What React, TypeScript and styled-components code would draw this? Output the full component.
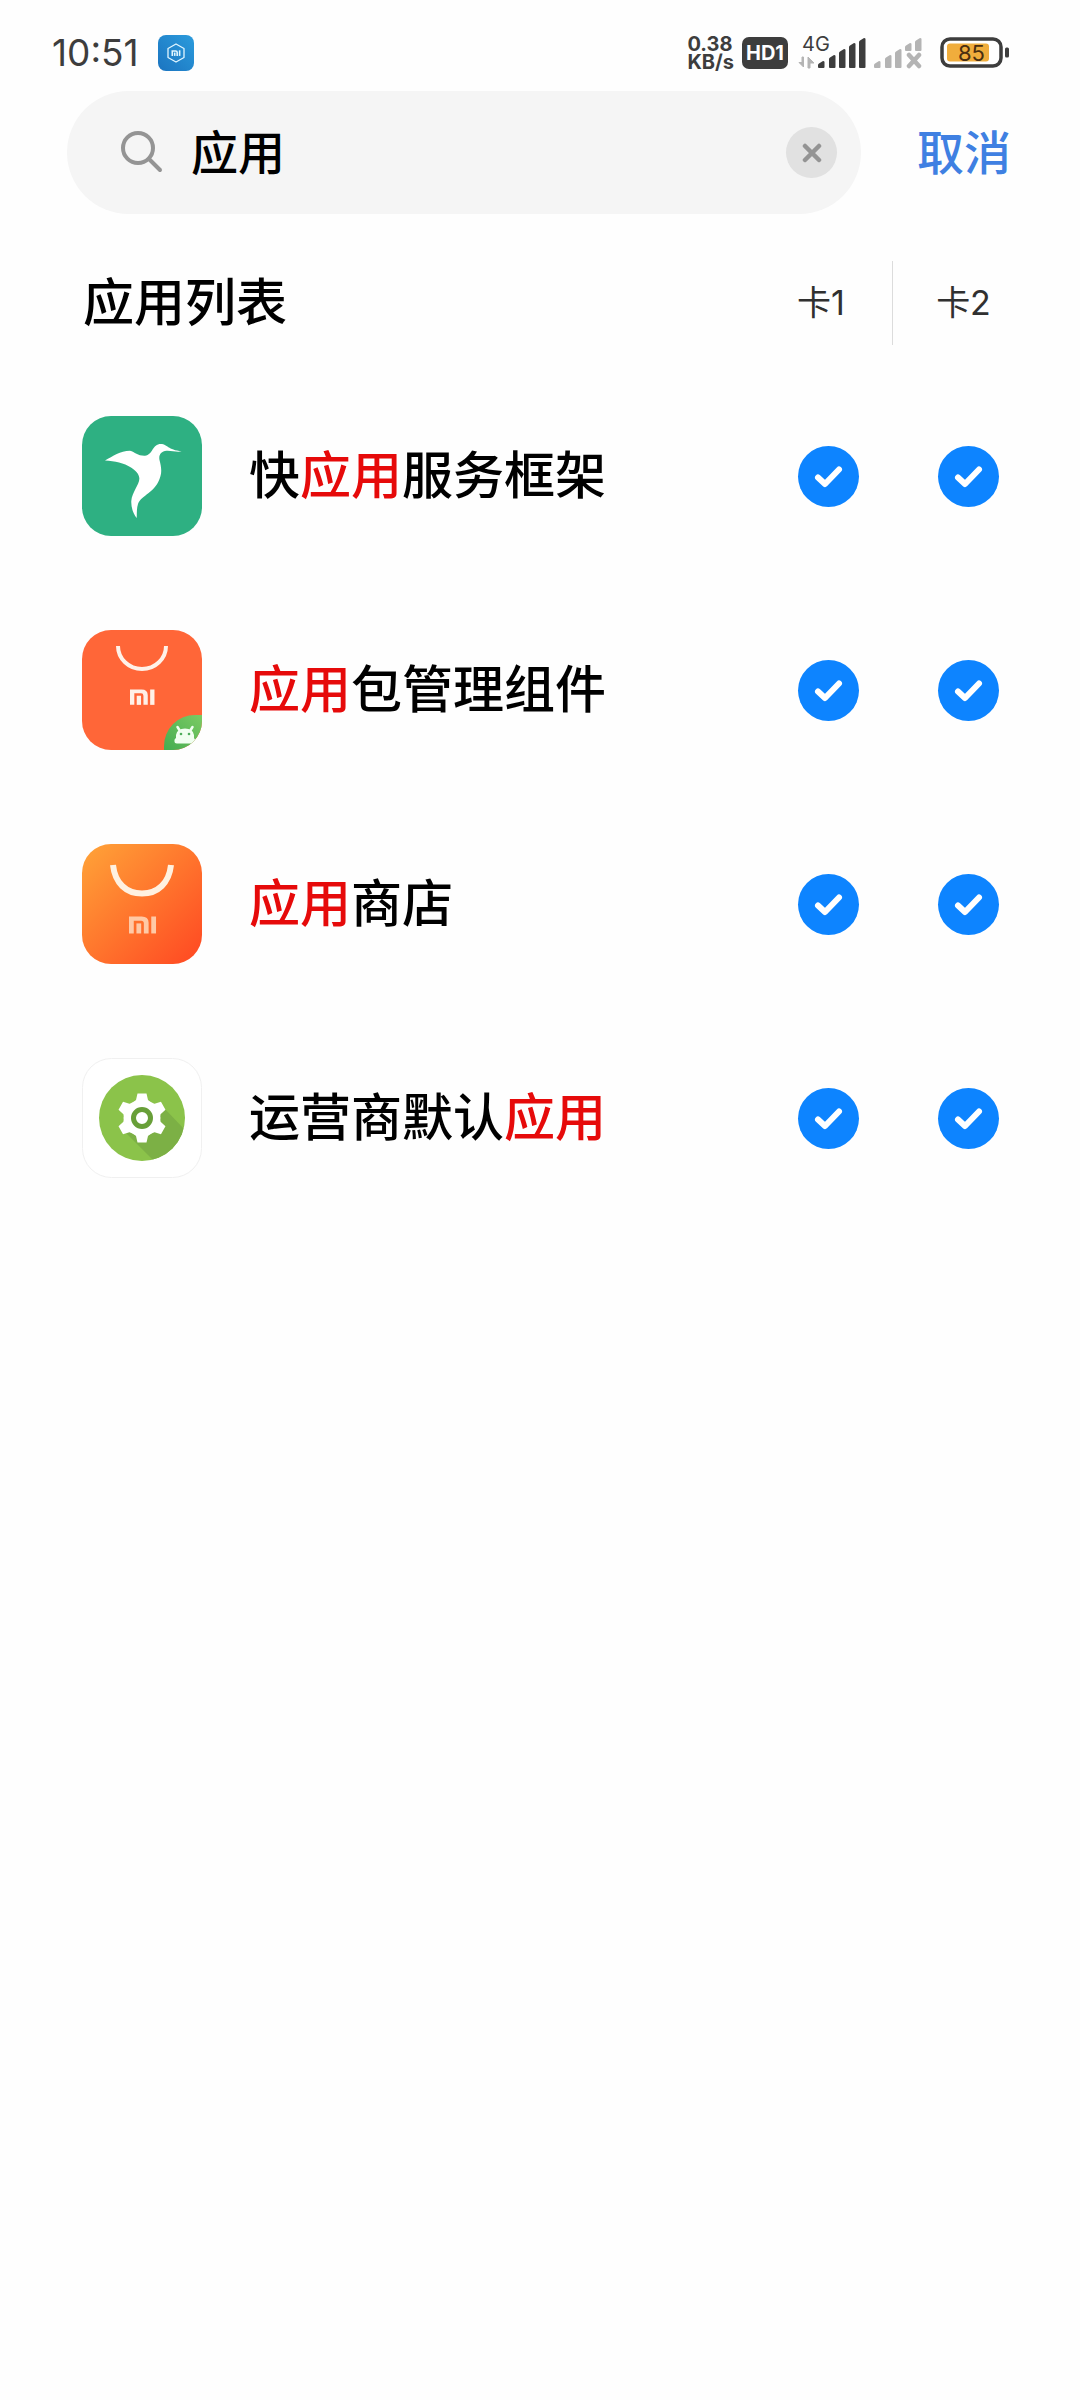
import React, { useState } from "react";
import styled, { createGlobalStyle } from "styled-components";

const GlobalStyle = createGlobalStyle`
  *, *::before, *::after { box-sizing: border-box; }
  html, body { margin: 0; background: #fefefe; }
  body {
    font-family: Inter, "Noto Sans CJK SC", sans-serif;
    color: #000;
  }
  button, input { font-family: inherit; }
`;

const Screen = styled.div`
  min-height: 100vh;
  display: flex;
  flex-direction: column;
`;

const StatusBar = styled.header`
  display: flex;
  align-items: center;
  justify-content: space-between;
  height: 91px;
  padding: 14px 70px 0 52px;
  color: #3d3d3d;
`;

const StatusGroup = styled.div<{ $gap: number }>`
  display: flex;
  align-items: center;
  gap: ${(p) => p.$gap}px;
`;

const Clock = styled.time`
  font-size: 37px;
  line-height: 40px;
`;

const NetSpeed = styled.div`
  white-space: pre-line;
  font-size: 20px;
  line-height: 18px;
  font-weight: 700;
`;

const HdBadge = styled.span`
  width: 46px;
  height: 32px;
  border-radius: 7px;
  background: #3d3d3d;
  color: #fff;
  font-size: 20px;
  line-height: 32px;
  font-weight: 700;
  text-align: center;
`;

const Cellular = styled.div`
  display: grid;
  margin-left: 2px;
  > * { grid-area: 1 / 1; }
`;

const NetworkType = styled.span`
  padding-left: 4px;
  font-size: 20px;
  line-height: 15px;
`;

const Battery = styled.div`
  display: grid;
  place-items: center start;
  margin-left: 10px;
  > * { grid-area: 1 / 1; }
`;

const BatteryLevel = styled.span`
  width: 63px;
  font-size: 22px;
  line-height: 32px;
  color: #4a2e10;
  text-align: center;
`;

const SearchRow = styled.form`
  display: flex;
  align-items: center;
  padding: 0 69px 0 67px;
`;

const SearchBox = styled.label`
  flex: 1;
  min-width: 0;
  display: flex;
  align-items: center;
  height: 123px;
  padding: 0 24px 0 52px;
  border-radius: 62px;
  background: #f5f5f5;
`;

const SearchInput = styled.input`
  flex: 1;
  min-width: 0;
  margin-left: 27px;
  padding: 0;
  border: 0;
  outline: 0;
  background: transparent;
  font-size: 47px;
  line-height: 68px;
  font-weight: 500;
  color: #000;
`;

const ClearButton = styled.button`
  width: 51px;
  height: 51px;
  padding: 0;
  border: 0;
  border-radius: 50%;
  background: #e1e1e1;
  display: grid;
  place-items: center;
`;

const CancelButton = styled.button`
  margin-left: 56px;
  padding: 0;
  border: 0;
  background: transparent;
  font-size: 47px;
  line-height: 68px;
  font-weight: 500;
  color: #3f80e2;
`;

const ListHeader = styled.div`
  display: flex;
  align-items: center;
  height: 84px;
  margin-top: 47px;
  padding: 0 46px 0 83px;
`;

const Title = styled.h1`
  flex: 1;
  margin: 0;
  font-size: 51px;
  line-height: 74px;
  font-weight: 500;
`;

const CardLabel = styled.span`
  width: 142px;
  font-size: 34px;
  line-height: 84px;
  color: #303030;
  text-align: center;
  & + & { border-left: 1px solid #dcdcdc; }
`;

const AppList = styled.ul`
  margin: 24px 0 0;
  padding: 0;
  list-style: none;
`;

const AppRow = styled.li`
  display: flex;
  align-items: center;
  height: 214px;
  padding: 0 42px 0 82px;
`;

const AppName = styled.span`
  flex: 1;
  margin-left: 47px;
  font-size: 51px;
  line-height: 74px;
  font-weight: 500;
`;

const Hit = styled.mark`
  background: transparent;
  color: #e60a0a;
`;

const CheckCell = styled.label`
  width: 140px;
  display: grid;
  place-items: center;
  > * { grid-area: 1 / 1; }
`;

const CheckInput = styled.input`
  appearance: none;
  width: 61px;
  height: 61px;
  margin: 0;
  border-radius: 50%;
  background: #e6e6e6;
  &:checked { background: #0d84ff; }
`;

const CheckMark = styled.svg`
  pointer-events: none;
`;

const MiLogo = ({ x, y, scale, color }: { x: number; y: number; scale: number; color: string }) => (
  <g transform={`translate(${x} ${y}) scale(${scale})`} fill={color}>
    <path d="M0 0H12Q18.500 0 18.500 6V16H14V6.500Q14 4 11.500 4H4.500V16H0Z" />
    <rect x="7" y="6.500" width="4.500" height="9.500" />
    <rect x="21" y="0" width="4.500" height="16" />
  </g>
);

const QuickAppIcon = () => (
  <svg width="120" height="120" viewBox="0 0 120 120" aria-hidden="true">
    <rect width="120" height="120" rx="29" fill="#2eb082" />
    <path
      fill="#fff"
      d="M23 44.500C31 40 38 35 48 34.700C53 36 56 40 63 39.700C71 39 70 28 79 28C85 28 86 34 99.700 35.300C95 36.500 90 34.500 84.500 34.800C79 35.500 76.500 39 77.500 44C79 50 80 55 78.500 60C74 77 59 79 56 88C54.500 93 55 97 54.700 102C51.500 98 49 92 49.300 85C50 76 58 68 57.300 62C57 58 54 55 49 51.500C42 47 33 45 23 44.500Z"
    />
  </svg>
);

const PackageIcon = () => (
  <svg width="120" height="120" viewBox="0 0 120 120" aria-hidden="true">
    <defs>
      <clipPath id="package-clip"><rect width="120" height="120" rx="29" /></clipPath>
      <linearGradient id="package-leaf" x1="1" y1="0" x2="0" y2="1">
        <stop offset="0" stopColor="#7bcb63" />
        <stop offset="1" stopColor="#45ac50" />
      </linearGradient>
    </defs>
    <g clipPath="url(#package-clip)">
      <rect width="120" height="120" fill="#ff6638" />
      <path d="M36 16A24 23 0 0 0 84 16" fill="none" stroke="#fff1e8" strokeWidth="4" />
      <MiLogo x={48} y={59.5} scale={0.96} color="#fff1e8" />
      <path d="M82 120V116A31 31 0 0 1 113 85H120V120Z" fill="url(#package-leaf)" />
      <path d="M95.500 97L98 101M110.500 97L108 101" stroke="#f1fff0" strokeWidth="2.500" strokeLinecap="round" />
      <path d="M94 105Q95 98.500 103 98.500Q111 98.500 112 105V108Q114 110 113 112Q112 113.500 107 113.500H95Q92 113.500 92.500 110Q92.500 109 94 108Z" fill="#f1fff0" />
      <circle cx="99" cy="104" r="1.300" fill="#4fae5b" />
      <circle cx="107" cy="104" r="1.300" fill="#4fae5b" />
    </g>
  </svg>
);

const StoreIcon = () => (
  <svg width="120" height="120" viewBox="0 0 120 120" aria-hidden="true">
    <defs>
      <linearGradient id="store-bg" x1="0" y1="0" x2="1" y2="1">
        <stop offset="0" stopColor="#ffa438" />
        <stop offset="1" stopColor="#ff4722" />
      </linearGradient>
    </defs>
    <rect width="120" height="120" rx="29" fill="url(#store-bg)" />
    <path d="M31 21C33 39 44 49.500 60 49.500C76 49.500 87 39 89 21" fill="none" stroke="#fff1e0" strokeWidth="6" />
    <MiLogo x={47} y={72.5} scale={1.06} color="#ffc9a6" />
  </svg>
);

const CarrierIcon = () => (
  <svg width="120" height="120" viewBox="0 0 120 120" aria-hidden="true">
    <defs>
      <clipPath id="carrier-clip"><circle cx="60" cy="60" r="43" /></clipPath>
    </defs>
    <rect x="0.500" y="0.500" width="119" height="119" rx="29" fill="#fff" stroke="#f0f0f0" />
    <circle cx="60" cy="60" r="43" fill="#8bc34a" />
    <path d="M43 74L78 109L120 90L83 51Z" fill="#7cb045" clipPath="url(#carrier-clip)" />
    <g fill="#fff">
      <circle cx="60" cy="60" r="18.500" />
      {[0, 60, 120, 180, 240, 300].map((angle) => (
        <path key={angle} d="M50 46L54 42L55.500 35.500H64.500L66 42L70 46Z" transform={`rotate(${angle} 60 60)`} />
      ))}
    </g>
    <circle cx="60" cy="60" r="8.500" fill="#fff" stroke="#689f38" strokeWidth="5" />
  </svg>
);

const bars = [
  { x: 0, top: 24 },
  { x: 11, top: 18 },
  { x: 21, top: 12 },
  { x: 31, top: 6 },
  { x: 41, top: 1 },
];

const barPath = (x: number, top: number, bottom: number) =>
  `M${x} ${top + 4}Q${x} ${top + 3} ${x + 1} ${top + 2.5}L${x + 5} ${top}Q${x + 6.5} ${top} ${x + 6.5} ${top + 1}V${bottom - 1}Q${x + 6.5} ${bottom} ${x + 5.5} ${bottom}H${x + 1}Q${x} ${bottom} ${x} ${bottom - 1}Z`;

const ActiveSignal = () => (
  <svg width="68" height="32" viewBox="0 0 68 32" aria-hidden="true">
    <path d="M5.500 20V30L1 25.500H4V20ZM10 31V20L16 26H12V31Z" fill="#b4b4b4" stroke="#b4b4b4" />
    <g transform="translate(20 0)" fill="#3d3d3d">
      {bars.map((b) => <path key={b.x} d={barPath(b.x, b.top, 31)} />)}
    </g>
  </svg>
);

const NoSignal = () => (
  <svg width="48" height="32" viewBox="0 0 48 32" aria-hidden="true">
    <g fill="#b4b4b4">
      {bars.map((b, i) => <path key={b.x} d={barPath(b.x, b.top, i > 2 ? 14 : 31)} />)}
    </g>
    <path d="M35 18L45 29M45 18L35 29" stroke="#b4b4b4" strokeWidth="4.500" strokeLinecap="round" />
  </svg>
);

const BatteryShape = () => (
  <svg width="70" height="32" viewBox="0 0 70 32" aria-hidden="true">
    <rect x="2" y="2" width="59" height="27" rx="8" fill="#fff" stroke="#3d3d3d" strokeWidth="3.500" />
    <rect x="7" y="6.500" width="42" height="18" rx="3" fill="#f0ad3c" />
    <rect x="65" y="10.500" width="4" height="10" rx="1.500" fill="#3d3d3d" />
  </svg>
);

const MiHomeIcon = () => (
  <svg width="36" height="36" viewBox="0 0 36 36" aria-hidden="true">
    <defs>
      <linearGradient id="mihome-bg" x1="0" y1="1" x2="1" y2="0">
        <stop offset="0" stopColor="#1b74c0" />
        <stop offset="1" stopColor="#2b9bdc" />
      </linearGradient>
    </defs>
    <rect width="36" height="36" rx="8" fill="url(#mihome-bg)" />
    <path d="M18 9L26 13.500V22.500L18 27L10 22.500V13.500Z" fill="none" stroke="#e2f6ff" strokeWidth="1.300" strokeLinejoin="round" />
    <MiLogo x={13.5} y={15.3} scale={0.35} color="#e2f6ff" />
  </svg>
);

const apps = [
  { name: "快应用服务框架", Icon: QuickAppIcon },
  { name: "应用包管理组件", Icon: PackageIcon },
  { name: "应用商店", Icon: StoreIcon },
  { name: "运营商默认应用", Icon: CarrierIcon },
];

const Highlighted = ({ text, query }: { text: string; query: string }) => {
  const at = query ? text.indexOf(query) : -1;
  if (at < 0) return <>{text}</>;
  return (
    <>
      {text.slice(0, at)}
      <Hit>{query}</Hit>
      {text.slice(at + query.length)}
    </>
  );
};

const CardCheck = ({ label }: { label: string }) => (
  <CheckCell>
    <CheckInput type="checkbox" defaultChecked aria-label={label} />
    <CheckMark width="61" height="61" viewBox="0 0 61 61" aria-hidden="true">
      <path d="M20 31.500L27 38L41 23.500" fill="none" stroke="#fff" strokeWidth="6" strokeLinecap="round" strokeLinejoin="round" />
    </CheckMark>
  </CheckCell>
);

export default function App() {
  const [query, setQuery] = useState("应用");

  return (
    <Screen>
      <GlobalStyle />
      <StatusBar>
        <StatusGroup $gap={19}>
          <Clock>10:51</Clock>
          <MiHomeIcon />
        </StatusGroup>
        <StatusGroup $gap={8}>
          <NetSpeed>{"0.38\nKB/s"}</NetSpeed>
          <HdBadge>HD1</HdBadge>
          <Cellular>
            <ActiveSignal />
            <NetworkType>4G</NetworkType>
          </Cellular>
          <NoSignal />
          <Battery>
            <BatteryShape />
            <BatteryLevel>85</BatteryLevel>
          </Battery>
        </StatusGroup>
      </StatusBar>

      <SearchRow onSubmit={(e) => e.preventDefault()}>
        <SearchBox>
          <svg width="45" height="45" viewBox="0 0 45 45" aria-hidden="true">
            <circle cx="19" cy="18" r="15" fill="none" stroke="#949494" strokeWidth="4" />
            <path d="M30 29L41 40" stroke="#949494" strokeWidth="4" strokeLinecap="round" />
          </svg>
          <SearchInput type="text" aria-label="搜索" value={query} onChange={(e) => setQuery(e.target.value)} />
          <ClearButton type="button" aria-label="清除" onClick={() => setQuery("")}>
            <svg width="20" height="20" viewBox="0 0 20 20" aria-hidden="true">
              <path d="M3 3L17 17M17 3L3 17" stroke="#949494" strokeWidth="4.500" strokeLinecap="round" />
            </svg>
          </ClearButton>
        </SearchBox>
        <CancelButton type="button">取消</CancelButton>
      </SearchRow>

      <main>
        <ListHeader>
          <Title>应用列表</Title>
          <CardLabel>卡1</CardLabel>
          <CardLabel>卡2</CardLabel>
        </ListHeader>
        <AppList>
          {apps.map(({ name, Icon }) => (
            <AppRow key={name}>
              <Icon />
              <AppName>
                <Highlighted text={name} query={query} />
              </AppName>
              <CardCheck label={`${name} 卡1`} />
              <CardCheck label={`${name} 卡2`} />
            </AppRow>
          ))}
        </AppList>
      </main>
    </Screen>
  );
}
